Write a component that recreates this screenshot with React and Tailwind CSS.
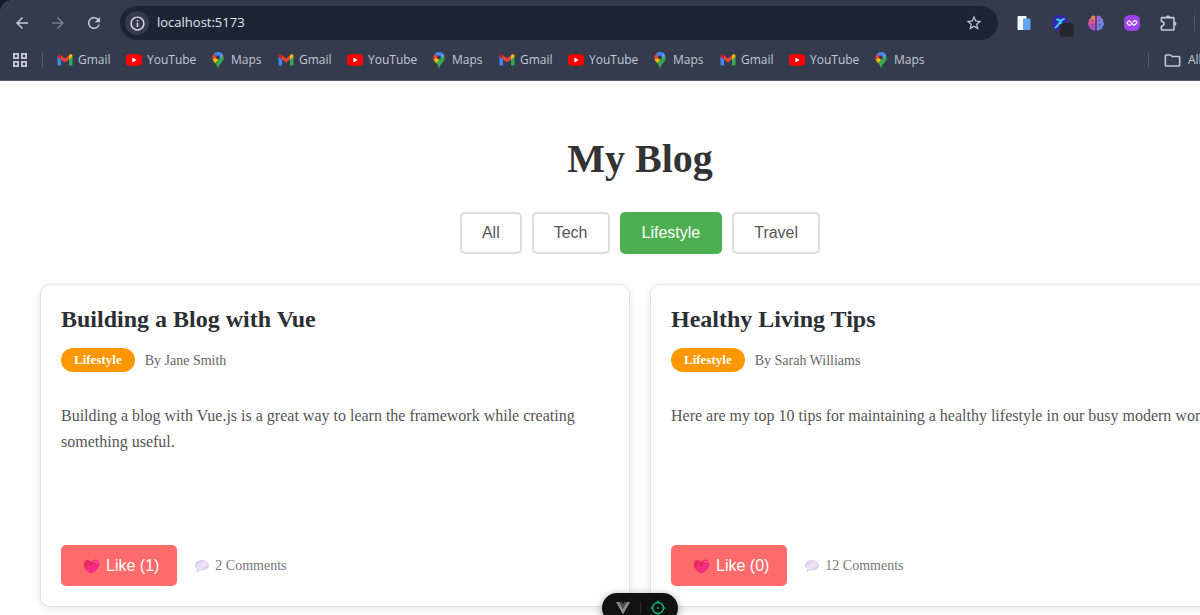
import { useState } from 'react';
import { MdArrowBack, MdArrowForward, MdRefresh, MdInfoOutline, MdStarBorder, MdOutlineFolder } from 'react-icons/md';

const categories = ['All', 'Tech', 'Lifestyle', 'Travel'];

const posts = [
  {
    id: 1,
    title: 'Building a Blog with Vue',
    category: 'Lifestyle',
    author: 'Jane Smith',
    content: 'Building a blog with Vue.js is a great way to learn the framework while creating something useful.',
    likes: 1,
    comments: 2,
  },
  {
    id: 2,
    title: 'Healthy Living Tips',
    category: 'Lifestyle',
    author: 'Sarah Williams',
    content: 'Here are my top 10 tips for maintaining a healthy lifestyle in our busy modern world.',
    likes: 0,
    comments: 12,
  },
];

function GmailIcon() {
  return (
    <svg viewBox="0 0 16 12" className="w-4 h-3" aria-hidden="true">
      <path d="M.5 2v8.8q0 .7.7.7H4V5z" fill="#4285f4" />
      <path d="M12 5v6.5h2.8q.7 0 .7-.7V2z" fill="#34a853" />
      <path d="M12 1.2V5.4l3.5-2.7V2c0-1.4-1.5-2-2.5-1.4z" fill="#fbbc04" />
      <path d="M4 1.2V5.4L.5 2.7V2C.5.6 2 0 3 .6z" fill="#c5221f" />
      <path d="M4 5.4V1.2l4 3.2 4-3.2v4.2L8 8.6z" fill="#ea4335" />
    </svg>
  );
}

function YouTubeIcon() {
  return (
    <svg viewBox="0 0 16 12" className="w-4 h-3" aria-hidden="true">
      <rect x="0" y="0.3" width="16" height="11.4" rx="3" fill="#f00" />
      <path d="M6.4 3.6v4.8L10.6 6z" fill="#fff" />
    </svg>
  );
}

function MapsIcon() {
  return (
    <svg viewBox="0 0 16 16" className="w-4 h-4" aria-hidden="true">
      <path d="M8 0a5.6 5.6 0 0 0-4.3 2L8 5.6 11.6.9A5.6 5.6 0 0 0 8 0z" fill="#4285f4" />
      <path d="M3.7 2A5.5 5.5 0 0 0 3 8l5-2.4z" fill="#ea4335" />
      <path d="M2.7 7.4c.5 1.500 1.6 2.6 2.6 3.9L12 4 8 5z" fill="#fbbc04" />
      <path d="M13 3.2c1.2 2.6.6 4.6-.6 6.3C10.8 11.7 9 12.8 8.4 15.4q-.4 1-.8 0C7.2 13.7 6.4 12.6 5.3 11.3z" fill="#34a853" />
      <path d="M11.6.9 8 5.6 9.6 7 13.2 3.500A5.6 5.6 0 0 0 11.6.9z" fill="#5f9bf7" />
      <circle cx="8" cy="5.6" r="2" fill="#333b4c" />
    </svg>
  );
}

function AppsIcon() {
  return (
    <svg viewBox="0 0 16 16" className="w-4 h-4" fill="none" stroke="currentColor" strokeWidth="1.8" aria-hidden="true">
      <rect x="1.9" y="1.9" width="4.2" height="4.2" />
      <rect x="9.9" y="1.9" width="4.2" height="4.2" />
      <rect x="1.9" y="9.9" width="4.2" height="4.2" />
      <rect x="9.9" y="9.9" width="4.2" height="4.2" />
    </svg>
  );
}

function DeviceIcon() {
  return (
    <svg viewBox="0 0 16 16" className="w-4 h-4" aria-hidden="true">
      <rect x="1.5" y="1" width="9" height="14" rx="1" fill="#f4f7fb" />
      <rect x="7" y="3.5" width="7.5" height="11.5" rx="1" fill="#62a5f3" />
    </svg>
  );
}

function SwirlIcon() {
  return (
    <svg viewBox="0 0 28 28" className="w-7 h-7" aria-hidden="true">
      <circle cx="14" cy="14" r="8" fill="#3b22ad" />
      <path d="M9.500 18.500C13 17 13.500 10.500 18 10M11 10.500q3.500 0 4 3t3 3" stroke="#32d5ee" strokeWidth="1.9" fill="none" strokeLinecap="round" />
      <rect x="14" y="14" width="14" height="14" rx="3.5" fill="#25272d" />
    </svg>
  );
}

function BrainIcon() {
  return (
    <svg viewBox="0 0 16 16" className="w-4 h-4" aria-hidden="true">
      <defs>
        <linearGradient id="brain-left" x1="0" y1="0" x2="0" y2="1">
          <stop offset="0" stopColor="#f58a4b" />
          <stop offset=".5" stopColor="#d94fa0" />
          <stop offset="1" stopColor="#9a4fe0" />
        </linearGradient>
        <linearGradient id="brain-right" x1="0" y1="0" x2="1" y2="1">
          <stop offset="0" stopColor="#c05bd6" />
          <stop offset="1" stopColor="#3f9ee8" />
        </linearGradient>
      </defs>
      <path d="M7.3 1.2C5-.2 3.3 1 3.2 2.7 1.300 3.300.3 5 1 6.400-.5 7.800-.1 10.300 1.300 11.200 1.200 13.200 2.600 14.300 3.900 14.300c.8 1.600 2.700 1.600 3.400.7z" fill="url(#brain-left)" />
      <path d="M8.7 1.2C11-.2 12.7 1 12.8 2.700c1.900.6 2.900 2.300 2.200 3.700 1.500 1.400 1.100 3.900-.3 4.800.1 2-1.300 3.100-2.600 3.100-.8 1.600-2.700 1.600-3.400.7z" fill="url(#brain-right)" />
      <path d="M3.2 5.200q2-.5 2.200 1M2.700 9.800q2.500-1.500 3 .5M4 12.500q.5-1.500 2-1M12.800 5.200q-2-.5-2.200 1M13.300 9.800q-2.500-1.500-3 .5M12 12.500q-.5-1.500-2-1" stroke="#4f4696" strokeWidth=".8" fill="none" />
    </svg>
  );
}

function LoopIcon() {
  return (
    <svg viewBox="0 0 16 16" className="w-4 h-4" aria-hidden="true">
      <rect width="16" height="16" rx="5.5" fill="#9b45e8" />
      <path d="M8 8.300 6.200 10.100q-.6.500-1.200 0L3.300 8.500q-.5-.6 0-1.200l1.300-1.200q.7-.5 1.300 0l3.600 3.700q.6.600 1.300 0l1.900-1.700q.6-.6 0-1.300l-1-1q-.7-.5-1.300 0L9.300 7" stroke="#fff" strokeWidth="1.2" fill="none" strokeLinecap="round" />
    </svg>
  );
}

function PuzzleIcon() {
  return (
    <svg viewBox="0 0 18 18" className="w-[18px] h-[18px]" aria-hidden="true">
      <path d="M3 3.600h11.400q.6 0 .6.600v11.200q0 .6-.6.600H3q-.6 0-.6-.6v-3.200q2.600-.6 2.600-2.500T2.400 7.200v-3q0-.6.6-.6z" fill="none" stroke="currentColor" strokeWidth="1.6" strokeLinejoin="round" />
      <path d="M7 3.200a2 2 0 0 1 4 0zM15.500 7.700a2 2 0 0 1 0 4z" fill="currentColor" />
    </svg>
  );
}

function HeartIcon() {
  return (
    <svg viewBox="0 0 19 18" className="w-[19px] h-[18px]" aria-hidden="true">
      <defs>
        <linearGradient id="heart" x1="0" y1="0" x2="1" y2="1">
          <stop offset="0" stopColor="#cf2c4e" />
          <stop offset=".5" stopColor="#fa2f78" />
          <stop offset="1" stopColor="#e01fa0" />
        </linearGradient>
      </defs>
      <path d="M9 16.500C4.500 14.500 1.800 11 1.800 7.300c0-2.700 1.700-4.300 3.700-4.300 1.600 0 2.900.9 3.600 2.400.9-1.600 2.500-2.800 4.400-2.800 2.300 0 3.800 1.700 3.800 4.300 0 4-3.600 7.400-8.300 9.600z" fill="url(#heart)" />
      <path d="M9.300 5.200q1.200 2-.4 3.400" stroke="#c01d52" strokeWidth="1" fill="none" strokeLinecap="round" />
      <path d="M12.300 4.300q2.400-.8 3.200 1.500" stroke="#ff6f9c" strokeWidth="1" fill="none" strokeLinecap="round" />
    </svg>
  );
}

function BubbleIcon() {
  return (
    <svg viewBox="0 0 16 14" className="w-4 h-[14px]" aria-hidden="true">
      <defs>
        <linearGradient id="bubble" x1="0" y1="0" x2="1" y2="1">
          <stop offset="0" stopColor="#d3c3e6" />
          <stop offset=".5" stopColor="#efe8f7" />
          <stop offset="1" stopColor="#cbbce0" />
        </linearGradient>
      </defs>
      <path d="M8 1.500c3.800 0 6.500 2 6.500 4.800S11.800 11 8 11q-1 0-1.800-.2Q4.800 12.600 2.600 12.700q1.300-1.300 1.100-2.700C2.200 9.100 1.500 7.800 1.500 6.300 1.500 3.500 4.200 1.500 8 1.500z" fill="url(#bubble)" stroke="#c6b5dc" strokeWidth=".5" />
    </svg>
  );
}

const bookmarks = [
  { name: 'Gmail', icon: GmailIcon, width: 'w-[69px]', href: '#gmail' },
  { name: 'YouTube', icon: YouTubeIcon, width: 'w-[84px]', href: '#youtube' },
  { name: 'Maps', icon: MapsIcon, width: 'w-[68px]', href: '#maps' },
];

const bookmarkRow = [...bookmarks, ...bookmarks, ...bookmarks, ...bookmarks];

const extensions = [
  { name: 'Devices', icon: DeviceIcon },
  { name: 'Swirl', icon: SwirlIcon },
  { name: 'Brain', icon: BrainIcon },
  { name: 'Loop', icon: LoopIcon },
  { name: 'Extensions', icon: PuzzleIcon },
];

function BrowserBar() {
  const [url, setUrl] = useState('localhost:5173');

  return (
    <header className="bg-[#151c2b] font-['Open_Sans',sans-serif] text-[#c3c9d6]">
      <div className="bg-[#333b4c] rounded-tl-xl border-b border-[#596170] pt-[6px]">
        <div className="flex items-center h-[34px] pl-3">
          <div className="flex items-center gap-4 w-[108px] shrink-0">
            <button aria-label="Back" className="w-5 flex justify-center"><MdArrowBack size={18} /></button>
            <button aria-label="Forward" className="w-5 flex justify-center text-[#757d8c]"><MdArrowForward size={18} /></button>
            <button aria-label="Reload" className="w-5 flex justify-center"><MdRefresh size={18} /></button>
          </div>
          <div className="flex items-center flex-1 h-full bg-[#1d2535] rounded-full pl-[5px] pr-[15px]">
            <button aria-label="Site information" className="w-6 h-6 rounded-full bg-[#333b4c] flex items-center justify-center text-[#e2e6ee]">
              <MdInfoOutline size={17} />
            </button>
            <input
              aria-label="Address"
              value={url}
              onChange={e => setUrl(e.target.value)}
              className="flex-1 min-w-0 ml-2 bg-transparent outline-none text-[13px] text-[#e2e6ee]"
            />
            <button aria-label="Bookmark this page"><MdStarBorder size={18} /></button>
          </div>
          <div className="flex items-center pl-2 shrink-0 w-[282px]">
            {extensions.map(({ name, icon: Icon }) => (
              <button key={name} aria-label={name} className="w-9 flex justify-center">
                <Icon />
              </button>
            ))}
            <span className="w-px h-4 bg-[#525b6b] ml-2" />
          </div>
        </div>
        <nav className="flex items-center h-10 pl-3 pr-2 text-[12px]">
          <button aria-label="Apps"><AppsIcon /></button>
          <span className="w-px h-4 bg-[#525b6b] mx-[14px]" />
          {bookmarkRow.map(({ name, icon: Icon, width, href }, i) => (
            <a key={i} href={href} className={`${width} flex items-center gap-[5px] shrink-0`}>
              <Icon />
              {name}
            </a>
          ))}
          <span className="w-px h-4 bg-[#525b6b] ml-auto mr-[14px]" />
          <button className="flex items-center gap-[6px] w-[109px] whitespace-nowrap">
            <MdOutlineFolder size={19} />
            All Bookmarks
          </button>
        </nav>
      </div>
    </header>
  );
}

function PostCard({ post }) {
  const [likes, setLikes] = useState(post.likes);

  return (
    <article className="flex flex-col border border-[#e2e2e2] rounded-[10px] bg-white p-5 shadow-[0_2px_8px_rgba(0,0,0,0.1)]">
      <h2 className="text-2xl leading-7 font-bold text-[#2c2f33]">{post.title}</h2>
      <div className="flex items-center gap-[10px] mt-[15px]">
        <span className="bg-[#ff9800] text-white text-[13px] leading-6 font-bold rounded-full px-[13px]">{post.category}</span>
        <span className="text-[14px] text-[#666]">By {post.author}</span>
      </div>
      <p className="mt-[31px] min-h-[120px] text-base leading-[26px] text-[#555]">{post.content}</p>
      <div className="flex items-center gap-[17px] mt-[22px]">
        <button
          onClick={() => setLikes(likes + 1)}
          className="flex items-center gap-[5px] h-[41px] pl-[21px] pr-[18px] rounded-[5px] bg-[#ff6b6b] text-white text-base font-['Liberation_Sans',sans-serif]"
        >
          <HeartIcon />
          Like ({likes})
        </button>
        <span className="flex items-center gap-[5px] text-[14px] text-[#777]">
          <BubbleIcon />
          {post.comments} Comments
        </span>
      </div>
    </article>
  );
}

function DevtoolsPill() {
  return (
    <div className="fixed left-[calc(50%+40px)] -translate-x-1/2 -bottom-2 h-[30px] w-[76px] rounded-full bg-[#111] shadow-[0_2px_8px_rgba(0,0,0,0.4)] flex items-center justify-center gap-[9px]">
      <button aria-label="Toggle devtools">
        <svg viewBox="0 0 16 16" className="w-4 h-4" aria-hidden="true">
          <path d="M1 2h3.2L8 8.8 11.8 2H15L8 14.5z" fill="#8b8b8b" />
          <path d="M4.2 2h2.5L8 4.4 9.3 2h2.5L8 8.8z" fill="#505050" />
        </svg>
      </button>
      <span className="w-px h-3 bg-[#2c2c2c]" />
      <button aria-label="Inspect component">
        <svg viewBox="0 0 16 16" className="w-4 h-4" fill="none" stroke="#0fa968" strokeWidth="1.5" aria-hidden="true">
          <circle cx="8" cy="8" r="5.5" />
          <path d="M8 .5v3M8 12.5v3M.5 8h3M12.5 8h3" />
          <circle cx="8" cy="8" r="1" fill="#0fa968" stroke="none" />
        </svg>
      </button>
    </div>
  );
}

export default function App() {
  const [active, setActive] = useState('Lifestyle');
  const visible = posts.filter(post => active === 'All' || post.category === active);

  return (
    <div className="min-h-screen overflow-hidden bg-white">
      <div className="w-[calc(100%+80px)]">
        <BrowserBar />
        <main className="px-10 pt-[55px] pb-2 font-['Liberation_Serif',serif]">
          <h1 className="text-[40px] leading-[46px] font-bold text-center text-[#333]">My Blog</h1>
          <div className="flex justify-center gap-[10px] mt-[30px] mb-[30px] font-['Liberation_Sans',sans-serif]">
            {categories.map(category => (
              <button
                key={category}
                onClick={() => setActive(category)}
                className={`h-[42px] px-5 text-base border-2 rounded-[5px] ${
                  category === active ? 'bg-[#4caf50] border-[#4caf50] text-white' : 'bg-white border-[#ddd] text-[#555]'
                }`}
              >
                {category}
              </button>
            ))}
          </div>
          <div className="grid grid-cols-2 gap-5">
            {visible.map(post => <PostCard key={post.id} post={post} />)}
          </div>
        </main>
      </div>
      <DevtoolsPill />
    </div>
  );
}
